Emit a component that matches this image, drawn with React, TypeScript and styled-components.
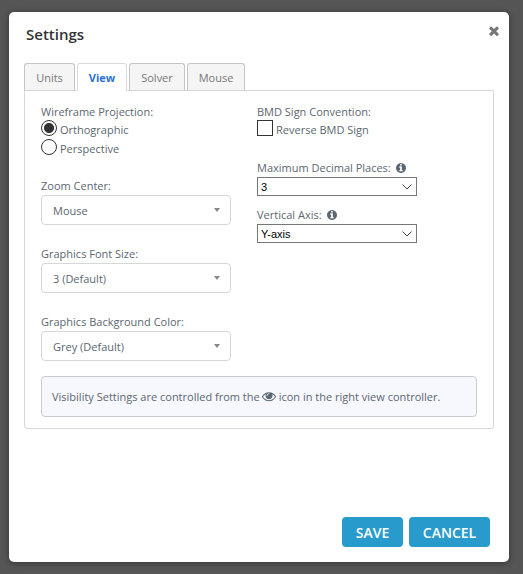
import React from "react";
import styled, { createGlobalStyle } from "styled-components";

const GlobalStyle = createGlobalStyle`
  * { box-sizing: border-box; }
  body {
    margin: 0;
    background: #555;
    font: 11px/16px "Open Sans", sans-serif;
    color: #5b6770;
  }
`;

const Backdrop = styled.div`
  height: 574px;
  padding: 12px 14px 12px 9px;
  overflow: hidden;
`;

const Dialog = styled.section`
  height: 550px;
  display: flex;
  flex-direction: column;
  padding: 0 15px;
  background: #fff;
  border-radius: 5px;
  box-shadow: 0 1px 6px rgba(0, 0, 0, 0.4);
`;

const Header = styled.header`
  height: 51px;
  display: flex;
  justify-content: space-between;
  padding: 12px 0 0 2px;
`;

const Title = styled.h1`
  margin: 0;
  font-size: 15px;
  line-height: 21px;
  font-weight: 600;
  color: #333;
`;

const CloseButton = styled.button`
  width: 10px;
  height: 12px;
  margin: 1px -5px 0 0;
  padding: 0;
  border: 0;
  background: none;
  color: #777;
`;

const Glyph = styled.svg<{ $size: number }>`
  display: block;
  flex: none;
  width: ${(p) => p.$size}px;
  height: ${(p) => p.$size}px;
  fill: currentColor;
`;

const Tabs = styled.nav`
  height: 28px;
  display: flex;
  gap: 2px;
  margin-bottom: -1px;
`;

const Tab = styled.button<{ $width: number; $active?: boolean }>`
  width: ${(p) => p.$width}px;
  height: 28px;
  padding: 1px 0 0;
  border: 1px solid ${(p) => (p.$active ? "#d8dadc" : "#c4c5c6")};
  border-bottom-color: ${(p) => (p.$active ? "#fff" : "#d3d5d7")};
  border-radius: 3px 3px 0 0;
  background: ${(p) => (p.$active ? "#fff" : "#f5f5f5")};
  color: ${(p) => (p.$active ? "#2a70dc" : "#777")};
  font: ${(p) => (p.$active ? 700 : 400)} 11px/16px "Open Sans", sans-serif;
  z-index: 1;
`;

const Panel = styled.div`
  width: 470px;
  height: 339px;
  padding: 13px 16px 0;
  border: 1px solid #d6d8da;
  border-radius: 0 0 3px 3px;
`;

const Columns = styled.div`
  height: 272px;
  display: grid;
  grid-template-columns: 190px 160px;
  column-gap: 26px;
`;

const Group = styled.div<{ $height: number }>`
  height: ${(p) => p.$height}px;
`;

const Label = styled.div<{ $gap?: number }>`
  height: 16px;
  display: flex;
  align-items: center;
  gap: 5px;
  margin-bottom: ${(p) => p.$gap ?? 0}px;
  white-space: nowrap;
`;

const Option = styled.label`
  height: 19px;
  display: flex;
  gap: 3px;
  line-height: 20px;
`;

const Radio = styled.span<{ $checked?: boolean }>`
  width: 16px;
  height: 16px;
  border: 1px solid #333;
  border-radius: 50%;
  background: ${(p) =>
    p.$checked ? "radial-gradient(circle, #333 4.6px, #fff 5.4px)" : "#fff"};
`;

const Checkbox = styled.span`
  width: 16px;
  height: 16px;
  border: 1px solid #333;
`;

const Dropdown = styled.div`
  height: 30px;
  display: flex;
  align-items: center;
  justify-content: space-between;
  padding: 2px 10px 0 11px;
  border: 1px solid #d6d7d9;
  border-radius: 4px;
`;

const Caret = styled.span`
  margin-top: -2px;
  border: 3px solid transparent;
  border-top: 4px solid #888;
  border-bottom: 0;
`;

const NativeSelect = styled.div`
  height: 19px;
  display: flex;
  align-items: center;
  justify-content: space-between;
  padding: 0 4px 0 3px;
  border: 1px solid #767676;
  color: #000;
  font: 11px/16px "Liberation Sans", Arial, sans-serif;
`;

const Chevron = styled.svg`
  width: 10px;
  height: 6px;
  fill: none;
  stroke: #444;
`;

const Notice = styled.div`
  width: 436px;
  height: 41px;
  display: flex;
  align-items: center;
  gap: 2.5px;
  padding: 0 10px;
  border: 1px solid #c9cbd3;
  border-radius: 4px;
  background: #f7f8fe;
  white-space: nowrap;
`;

const Footer = styled.footer`
  margin-top: auto;
  height: 45px;
  display: flex;
  justify-content: flex-end;
  gap: 6px;
  padding-right: 4px;
`;

const Action = styled.button<{ $width: number }>`
  width: ${(p) => p.$width}px;
  height: 30px;
  padding: 1px 0 0;
  border: 0;
  border-radius: 4px;
  background: #289bcc;
  color: #fff;
  font: 600 14px/20px "Open Sans", sans-serif;
`;

const paths = {
  close:
    "M1490 1322q0 40-28 68l-136 136q-28 28-68 28t-68-28l-294-294-294 294q-28 28-68 28t-68-28l-136-136q-28-28-28-68t28-68l294-294-294-294q-28-28-28-68t28-68l136-136q28-28 68-28t68 28l294 294 294-294q28-28 68-28t68 28l136 136q28 28 28 68t-28 68l-294 294 294 294q28 28 28 68z",
  info: "M1152 1376v-160q0-14-9-23t-23-9h-96v-512q0-14-9-23t-23-9h-320q-14 0-23 9t-9 23v160q0 14 9 23t23 9h96v320h-96q-14 0-23 9t-9 23v160q0 14 9 23t23 9h448q14 0 23-9t9-23zm-128-896v-160q0-14-9-23t-23-9h-192q-14 0-23 9t-9 23v160q0 14 9 23t23 9h192q14 0 23-9t9-23zm640 416q0 209-103 385.5t-279.5 279.5-385.5 103-385.5-103-279.5-279.5-103-385.5 103-385.5 279.5-279.5 385.5-103 385.5 103 279.5 279.5 103 385.5z",
  eye: "M1664 960q-152-236-381-353 61 104 61 225 0 185-131.5 316.5t-316.5 131.5-316.5-131.5-131.5-316.5q0-121 61-225-229 117-381 353 133 205 333.5 326.5t434.5 121.5 434.5-121.5 333.5-326.5zm-720-384q0-20-14-34t-34-14q-125 0-214.5 89.5t-89.5 214.5q0 20 14 34t34 14 34-14 14-34q0-86 61-147t147-61q20 0 34-14t14-34zm848 384q0 34-20 69-140 230-376.5 368.5t-499.5 138.5-499.5-139-376.5-368q-20-35-20-69t20-69q140-229 376.5-368t499.5-139 499.5 139 376.5 368q20 35 20 69z",
};

const boxes = {
  close: "302 302 1188 1252",
  info: "128 128 1536 1536",
  eye: "0 100 1792 1792",
};

function Icon({ name, size }: { name: keyof typeof paths; size: number }) {
  return (
    <Glyph $size={size} viewBox={boxes[name]}>
      <path d={paths[name]} />
    </Glyph>
  );
}

function Field({ label, value }: { label: string; value: string }) {
  return (
    <Group $height={68}>
      <Label $gap={1}>{label}</Label>
      <Dropdown>
        {value}
        <Caret />
      </Dropdown>
    </Group>
  );
}

function InfoField({ label, value }: { label: string; value: string }) {
  return (
    <Group $height={47}>
      <Label $gap={1}>
        {label}
        <Icon name="info" size={10} />
      </Label>
      <NativeSelect>
        {value}
        <Chevron viewBox="0 0 10 6">
          <path d="M0.5 0.5 5 5 9.5 0.5" />
        </Chevron>
      </NativeSelect>
    </Group>
  );
}

export default function App() {
  return (
    <Backdrop>
      <GlobalStyle />
      <Dialog>
        <Header>
          <Title>Settings</Title>
          <CloseButton aria-label="Close">
            <Icon name="close" size={10} />
          </CloseButton>
        </Header>
        <Tabs>
          <Tab $width={51}>Units</Tab>
          <Tab $width={50} $active>View</Tab>
          <Tab $width={56}>Solver</Tab>
          <Tab $width={58}>Mouse</Tab>
        </Tabs>
        <Panel>
          <Columns>
            <div>
              <Group $height={74}>
                <Label>Wireframe Projection:</Label>
                <Option><Radio $checked />Orthographic</Option>
                <Option><Radio />Perspective</Option>
              </Group>
              <Field label="Zoom Center:" value="Mouse" />
              <Field label="Graphics Font Size:" value="3 (Default)" />
              <Field label="Graphics Background Color:" value="Grey (Default)" />
            </div>
            <div>
              <Group $height={56}>
                <Label>BMD Sign Convention:</Label>
                <Option><Checkbox />Reverse BMD Sign</Option>
              </Group>
              <InfoField label="Maximum Decimal Places:" value="3" />
              <InfoField label="Vertical Axis:" value="Y-axis" />
            </div>
          </Columns>
          <Notice>
            <span>Visibility Settings are controlled from the</span>
            <Icon name="eye" size={14} />
            <span>icon in the right view controller.</span>
          </Notice>
        </Panel>
        <Footer>
          <Action $width={61}>SAVE</Action>
          <Action $width={81}>CANCEL</Action>
        </Footer>
      </Dialog>
    </Backdrop>
  );
}
